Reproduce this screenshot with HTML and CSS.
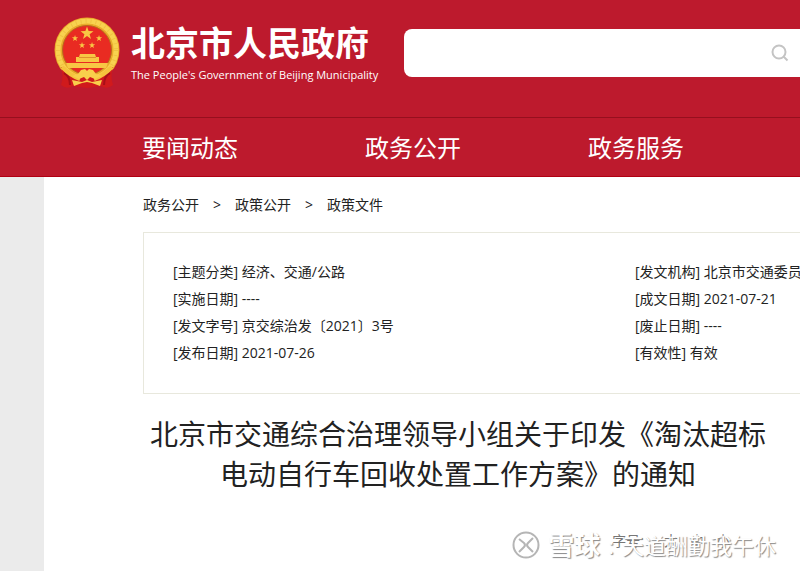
FILE: index.html
```html
<!DOCTYPE html>
<html lang="zh-CN">
<head>
  <meta charset="UTF-8">
  <title>北京市人民政府</title>
  <link rel="stylesheet" href="styles.css">
</head>
<body>
  <header class="header">
    <div class="top">
      <a class="logo" href="#">
        <svg class="emblem" viewBox="0 0 68 74" aria-hidden="true">
          <circle cx="34" cy="34" r="32.500" fill="#e9ab2b"/>
          <circle cx="34" cy="34" r="29" fill="none" stroke="#f8d24f" stroke-width="5"/>
          <circle cx="34" cy="34" r="29" fill="none" stroke="#f0c142" stroke-width="4" stroke-dasharray="1 4"/>
          <circle cx="34" cy="34" r="24.500" fill="#e92b22" stroke="#b86b1c" stroke-width="1"/>
          <g fill="#f8c744">
            <path id="star" d="M34 10.500 L35.600 15.100 L40.500 15.200 L36.600 18.200 L38 22.900 L34 20.100 L30 22.900 L31.400 18.200 L27.500 15.200 L32.400 15.100Z"/>
            <use href="#star" transform="translate(5.700 14) scale(.48)"/>
            <use href="#star" transform="translate(29.700 14) scale(.48)"/>
            <use href="#star" transform="translate(12.700 21) scale(.48)"/>
            <use href="#star" transform="translate(22.700 21) scale(.48)"/>
            <path d="M27 38h15l1 3h3v5h-23v-5h3z"/>
            <path d="M13 47h42l-2 5h-38z"/>
          </g>
          <path d="M26 41.500h17" stroke="#e0912c"/>
          <path d="M8 51 Q14 53 18 57 L25 62 L34 58 L43 62 L50 57 Q54 53 60 51 Q57 60 60 69 Q54 74 48 70 L34 72 L20 70 Q14 74 8 69 Q11 60 8 51Z" fill="#d01a1c"/>
          <path d="M11 57 Q17 60 17 69M57 57 Q51 60 51 69" fill="none" stroke="#a80f18" stroke-width="2"/>
          <path d="M9 51 Q18 60 27 63M59 51 Q50 60 41 63" fill="none" stroke="#f5c33d" stroke-width="4"/>
          <path d="M25 58 L28 54 L32 53 L34 55 L36 53 L40 54 L43 58 L49 60 L42 63 L37 61 L34 64 L31 61 L26 63 L19 60Z" fill="#f9cf4b"/>
          <path d="M19 64 L29 66 L34 64 L39 66 L49 64 L47 70 L39 67 L34 66 L29 67 L21 70Z" fill="#f9cf4b"/>
        </svg>
        <span class="logo-text">
          <strong>北京市人民政府</strong>
          <span>The People's Government of Beijing Municipality</span>
        </span>
      </a>
      <form class="search">
        <input type="text" aria-label="搜索">
        <button type="submit" aria-label="搜索">
          <svg viewBox="0 0 18 18" width="18" height="18">
            <circle cx="8" cy="8" r="6.500"/>
            <path d="M12.500 12.500 L16.500 16.500"/>
          </svg>
        </button>
      </form>
    </div>
    <nav class="nav">
      <a href="#">要闻动态</a>
      <a href="#">政务公开</a>
      <a href="#">政务服务</a>
    </nav>
  </header>

  <main class="main">
    <div class="crumbs">
      <a href="#">政务公开</a>
      <span>&gt;</span>
      <a href="#">政策公开</a>
      <span>&gt;</span>
      <a href="#">政策文件</a>
    </div>

    <div class="info">
      <ul>
        <li>[主题分类] 经济、交通/公路</li>
        <li>[实施日期] ----</li>
        <li>[发文字号] 京交综治发〔2021〕3号</li>
        <li>[发布日期] 2021-07-26</li>
      </ul>
      <ul>
        <li>[发文机构] 北京市交通委员</li>
        <li>[成文日期] 2021-07-21</li>
        <li>[废止日期] ----</li>
        <li>[有效性] 有效</li>
      </ul>
    </div>

    <h1>北京市交通综合治理领导小组关于印发《淘汰超标<br>电动自行车回收处置工作方案》的通知</h1>

    <div class="tools">
      <div class="font-size">
        <span>字号:</span>
        <button type="button">大</button>
        <button type="button">中</button>
        <button type="button">小</button>
      </div>
      <div class="watermark">
        <svg viewBox="0 0 28 28" width="28" height="28" aria-hidden="true">
          <circle cx="14" cy="14" r="12.500"/>
          <path d="M7 8 L12 12 Q14 14 12 16 L7 21M21 21 L16 16 Q14 14 16 12 L21 7"/>
        </svg>
        <b>雪球</b><span>:</span><span>天道酬勤我午休</span>
      </div>
    </div>
  </main>
</body>
</html>
```
FILE: styles.css
```css
* {
  box-sizing: border-box;
}
body {
  font-family: "Open Sans", "Noto Sans CJK SC", sans-serif;
  font-size: 14px;
  color: #222;
  background: #ebebeb;
  margin: 0;
  overflow-x: hidden;
}
a {
  color: inherit;
  text-decoration: none;
}
ul {
  list-style: none;
  margin: 0;
  padding: 0;
}
button {
  font: inherit;
  color: inherit;
  background: none;
  border: none;
  padding: 0;
  cursor: pointer;
}

/* header */
.header {
  color: #fff;
  background: #bd1a2d;
  border-bottom: 1px solid #b00012;
}
.top {
  display: flex;
  align-items: flex-start;
  gap: 32px;
  padding: 16px 0 27px 53px;
}
.logo {
  display: flex;
  flex: none;
  gap: 10px;
}
.emblem {
  width: 68px;
  height: 74px;
}
.logo-text {
  display: flex;
  flex-direction: column;
  width: 241px;
  padding-top: 7px;
  font-size: 11px;
  line-height: 24px;
  white-space: nowrap;
}
.logo-text strong {
  font-size: 34px;
  line-height: 40px;
}
.search {
  display: flex;
  flex: 1;
  height: 48px;
  margin-top: 13px;
  padding-right: 11px;
  background: #fff;
  border-radius: 8px 0 0 8px;
}
.search input {
  flex: 1;
  min-width: 0;
  padding: 0 16px;
  font: inherit;
  background: none;
  border: none;
  outline: none;
}
.search svg {
  display: block;
  fill: none;
  stroke: #c4c4c4;
  stroke-width: 2;
}
.nav {
  display: flex;
  gap: 127px;
  padding: 2px 0 0 142px;
  border-top: 1px solid #960f1e;
  font-size: 24px;
  line-height: 56px;
  white-space: nowrap;
}

/* content */
.main {
  min-height: calc(100vh - 177px);
  margin-left: 44px;
  padding: 17px 0 8px 99px;
  background: #fff;
}
.crumbs {
  display: flex;
  gap: 14px;
  line-height: 22px;
}
.info {
  display: grid;
  grid-template-columns: 462px 1fr;
  margin-top: 16px;
  padding: 25px 0 27px 29px;
  border: 1px solid #e8e8dd;
  border-right: none;
  line-height: 27px;
  white-space: nowrap;
}
h1 {
  margin: 20px 0 0;
  padding-right: 27px;
  font-size: 28px;
  font-weight: normal;
  line-height: 40px;
  text-align: center;
  white-space: nowrap;
}
.tools {
  position: relative;
  margin-top: 37px;
}
.font-size {
  display: flex;
  justify-content: flex-end;
  gap: 12px;
  padding-right: 70px;
  line-height: 20px;
  color: #777;
}
.font-size span {
  margin-right: 8px;
}
.watermark {
  position: absolute;
  top: 0;
  right: 24px;
  display: flex;
  align-items: center;
  gap: 8px;
  font-size: 22px;
  line-height: 28px;
  color: #fff;
  text-shadow: 1px 1px 1px #888;
  white-space: nowrap;
}
.watermark b {
  font-size: 26px;
}
.watermark svg {
  fill: none;
  stroke: #b5b5b5;
  stroke-width: 2;
}
```
